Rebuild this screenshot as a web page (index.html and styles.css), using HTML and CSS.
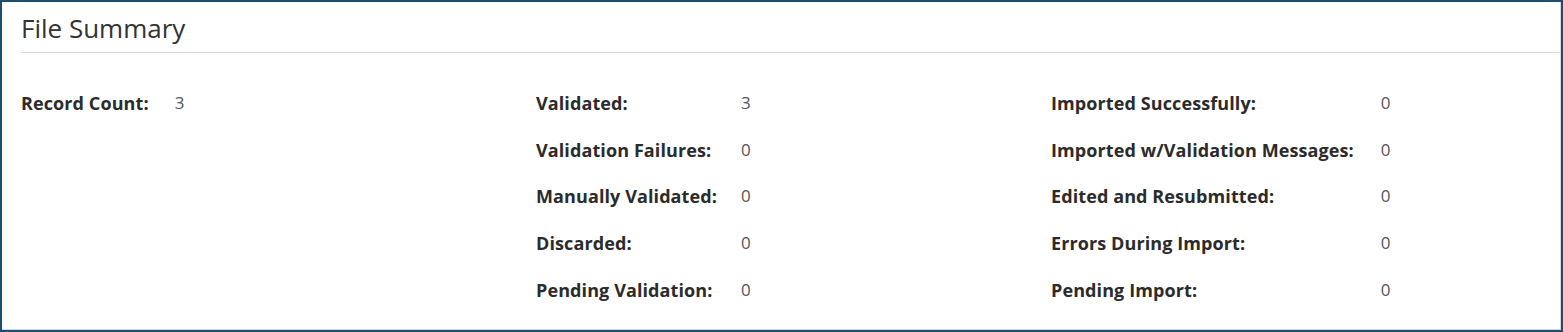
FILE: index.html
```html
<!DOCTYPE html>
<html>
<head>
<meta charset="utf-8">
<link rel="stylesheet" href="styles.css">
</head>
<body>
<div class="frame">
  <div class="panel">
    <div class="head"><h1 class="title">File Summary</h1></div>
    <div class="cols">
      <div class="group">
        <div class="lbl">Record Count:</div><div class="val">3</div>
      </div>
      <div class="group">
        <div class="lbl">Validated:</div><div class="val">3</div>
        <div class="lbl">Validation Failures:</div><div class="val">0</div>
        <div class="lbl">Manually Validated:</div><div class="val">0</div>
        <div class="lbl">Discarded:</div><div class="val">0</div>
        <div class="lbl">Pending Validation:</div><div class="val">0</div>
      </div>
      <div class="group">
        <div class="lbl">Imported Successfully:</div><div class="val">0</div>
        <div class="lbl">Imported w/Validation Messages:</div><div class="val">0</div>
        <div class="lbl">Edited and Resubmitted:</div><div class="val">0</div>
        <div class="lbl">Errors During Import:</div><div class="val">0</div>
        <div class="lbl">Pending Import:</div><div class="val">0</div>
      </div>
    </div>
  </div>
</div>
</body>
</html>
```
FILE: styles.css
```css
html, body { margin: 0; padding: 0; background: #fff; }
body { font-family: "Open Sans", "Noto Sans", sans-serif; color: #333; }
.frame {
  width: 1563px; height: 332px; box-sizing: border-box;
  border: 2px solid #1b4e71;
}
.panel {
  height: 100%; box-sizing: border-box;
  border-right: 1px solid #d8d8d8;
  border-bottom: 1px solid #d8d8d8;
  padding: 0 0 0 19px;
}
.head { border-bottom: 1px solid #dcdcdc; height: 51px; box-sizing: border-box; }
.title { margin: 0; padding-top: 9px; font-size: 26px; font-weight: 400; line-height: 34px; color: #333; letter-spacing: 0; }
.cols { display: grid; grid-template-columns: 515px 515px 515px; padding-top: 37px; }
.group { display: grid; grid-template-columns: max-content auto; column-gap: 26px; align-content: start; row-gap: 0; }
.group:nth-child(2) { column-gap: 24px; }
.group:last-child { column-gap: 27px; }
.lbl, .val { height: 46.7px; line-height: 26px; font-size: 18px; }
.lbl { font-weight: 700; color: #2b2b2b; letter-spacing: 0.1px; }
.val { color: #555; font-size: 17px; }
```
